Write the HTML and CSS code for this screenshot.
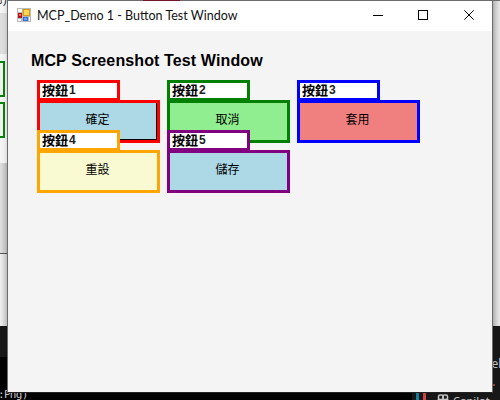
FILE: index.html
```html
<!DOCTYPE html>
<html lang="zh-Hant">
<head>
<meta charset="utf-8">
<title>MCP_Demo 1 - Button Test Window</title>
<link rel="stylesheet" href="styles.css">
</head>
<body>
<div class="desktop">
  <div class="back-top"></div>
  <div class="back-red"></div>
  <span class="back-char">用)</span>
  <div class="back-band"></div>
  <div class="back-box back-box-a"></div>
  <div class="back-box back-box-b"></div>
  <div class="back-rule"></div>
  <div class="back-right"></div>
  <div class="back-dark"></div>
  <div class="console"><span class="console-text">:Png)</span></div>
  <div class="panel">
    <span class="stripe blue"></span><span class="stripe red"></span>
    <svg class="copilot" width="12" height="12" viewBox="0 0 12 12" fill="none" stroke="#c8c8c8" stroke-width="1.5"><rect x="1.5" y="1" width="4.5" height="4.5" rx="1.5"/><rect x="6" y="1" width="4.5" height="4.5" rx="1.5"/><path d="M1.5 5 .8 7v3h10.4V7l-.7-2"/></svg>
    <span class="copilot-text">Copilot</span>
  </div>
  <span class="back-word">nel</span>
  <span class="back-dot"></span>

  <main class="window">
    <header class="titlebar">
      <svg class="app-icon" width="14" height="14" viewBox="0 0 14 14" shape-rendering="crispEdges">
        <rect width="14" height="14" fill="#b9b9b9"/>
        <path fill="#fff" d="M1 1h4v3H1zM1 11h3v2H1zM12 9h1v4h-1z"/>
        <rect x="1" y="5" width="4" height="5" fill="#b51414"/>
        <rect x="2" y="6" width="2" height="2" fill="#ef6a5a"/>
        <rect x="6" y="1" width="7" height="7" fill="#d69a12"/>
        <rect x="7" y="2" width="5" height="5" fill="#ffd554"/>
        <rect x="6" y="9" width="5" height="4" fill="#2f6fda"/>
        <rect x="7" y="10" width="3" height="2" fill="#6fa8fa"/>
      </svg>
      <span class="title">MCP_Demo 1 - Button Test Window</span>
      <svg class="controls" width="130" height="30" viewBox="0 0 130 30" fill="none" stroke="#000">
        <path d="M11 14.5h10M56.5 9.5h9v9h-9z" shape-rendering="crispEdges"/>
        <path d="m102.3 9.3 9.4 9.4m0-9.4-9.4 9.4"/>
      </svg>
    </header>
    <h1 class="heading">MCP Screenshot Test Window</h1>
    <div class="buttons">
      <section class="cell red-cell"><label class="tag">按鈕<span>1</span></label><button class="btn aqua focused">確定</button></section>
      <section class="cell green-cell"><label class="tag">按鈕<span>2</span></label><button class="btn lime">取消</button></section>
      <section class="cell blue-cell"><label class="tag">按鈕<span>3</span></label><button class="btn coral">套用</button></section>
      <section class="cell orange-cell"><label class="tag">按鈕<span>4</span></label><button class="btn cream">重設</button></section>
      <section class="cell purple-cell"><label class="tag">按鈕<span>5</span></label><button class="btn aqua">儲存</button></section>
    </div>
  </main>
</div>
</body>
</html>
```
FILE: styles.css
```css
* { box-sizing: border-box; }
body { margin: 0; font-family: "Liberation Sans", "Noto Sans CJK TC", sans-serif; }
.desktop { position: relative; width: 500px; height: 400px; overflow: hidden; background: #f4f4f4; }
.desktop > * { position: absolute; }

/* Windows behind the main one */
.back-top { left: 37px; top: 0; width: 463px; height: 1px; background: #6e6b6d; }
.back-red { left: 143px; top: 0; width: 37px; height: 1px; background: #76152a; z-index: 2; }
.back-char { left: -9px; top: -8px; font-size: 12px; line-height: 14px; color: #333; white-space: nowrap; }
.back-band { left: 0; top: 13px; width: 8px; height: 41px; background: #dedede; }
.back-box { left: -10px; width: 15px; border: 2px solid #078307; background: #f1f1f1; }
.back-box-a { top: 61px; height: 36px; }
.back-box-b { top: 102px; height: 36px; }
.back-rule { left: 0; top: 163px; width: 8px; height: 163px; background: linear-gradient(90deg, #e0e0e0, #bdbdbd); }
.back-rule::after { content: ""; position: absolute; left: 0; top: 90px; width: 8px; height: 73px; border-top: 1px solid #555; background: linear-gradient(90deg, #f0f0f0, #cacaca); }
.back-right { left: 492px; top: 1px; width: 8px; height: 325px; background: linear-gradient(90deg, #bdbdbd, #e8e8e8); }
.back-dark { left: 0; top: 326px; width: 500px; height: 74px; background: #181818; }
.console { left: 0; top: 357px; width: 412px; height: 43px; background: #000; }
.console-text { position: absolute; left: -2px; top: 32px; font: 11px/12px "DejaVu Sans Mono", monospace; color: #ccc; letter-spacing: -.7px; }
.panel { left: 412px; top: 392px; width: 88px; height: 20px; display: flex; background: #181818; }
.stripe { width: 3px; height: 8px; margin-left: 4px; background: #167fa5; }
.stripe.red { background: #dc4545; }
.copilot { margin: 2px 0 0 11px; }
.copilot-text { margin: 1px 0 0 4px; font: 11px/15px "Noto Sans", sans-serif; color: #c8c8c8; }
.back-word { left: 484px; top: 356px; font: 12px/15px "Noto Sans", sans-serif; color: #c8c8c8; }
.back-dot { left: 493px; top: 384px; width: 2px; height: 2px; background: #a5472f; }

/* Main window */
.window { left: 7px; top: 0; width: 486px; height: 393px; border: 1px solid #6d6b6d; border-bottom-color: #222; background: #f4f4f4; box-shadow: 0 0 5px rgba(0, 0, 0, .2); }
.titlebar { display: flex; height: 30px; background: #fff; }
.app-icon { margin: 7px 0 0 9px; }
.title { margin-left: 6px; font: 12.5px/30px Lato, sans-serif; letter-spacing: 0; color: #111; white-space: nowrap; }
.controls { margin-left: auto; }
.heading { margin: 20px 0 0 23px; font-size: 16px; line-height: 20px; font-weight: bold; letter-spacing: .12px; color: #000; white-space: nowrap; }
.buttons { display: grid; grid-template-columns: repeat(3, 130px); grid-auto-rows: 50px; margin: 9px 0 0 29px; }
.cell { display: flex; flex-direction: column; position: relative; height: 63px; }
.tag { width: 83px; height: 20px; flex: none; padding-left: 2px; border: 3px solid; border-bottom-width: 2px; border-color: var(--edge); background: #fff; font: bold 13px/13px "Noto Sans CJK TC", sans-serif; color: #000; white-space: nowrap; }
.tag span { margin-left: 1px; font: bold 12px/14px "Liberation Sans", sans-serif; color: #222; vertical-align: top; }
.btn { width: 123px; height: 43px; flex: none; padding: 0 2px 6px 0; border: 3px solid var(--edge); font: 12px/16px "Noto Sans CJK TC", sans-serif; color: #000; }
.focused { box-shadow: inset -1px -1px #000; }
.red-cell { --edge: #f00; }
.green-cell { --edge: #008000; }
.blue-cell { --edge: #00f; }
.orange-cell { --edge: #ffa500; }
.purple-cell { --edge: #800080; }
.aqua { background: #add8e6; }
.lime { background: #90ee90; }
.coral { background: #f08080; }
.cream { background: #fafad2; }
```
